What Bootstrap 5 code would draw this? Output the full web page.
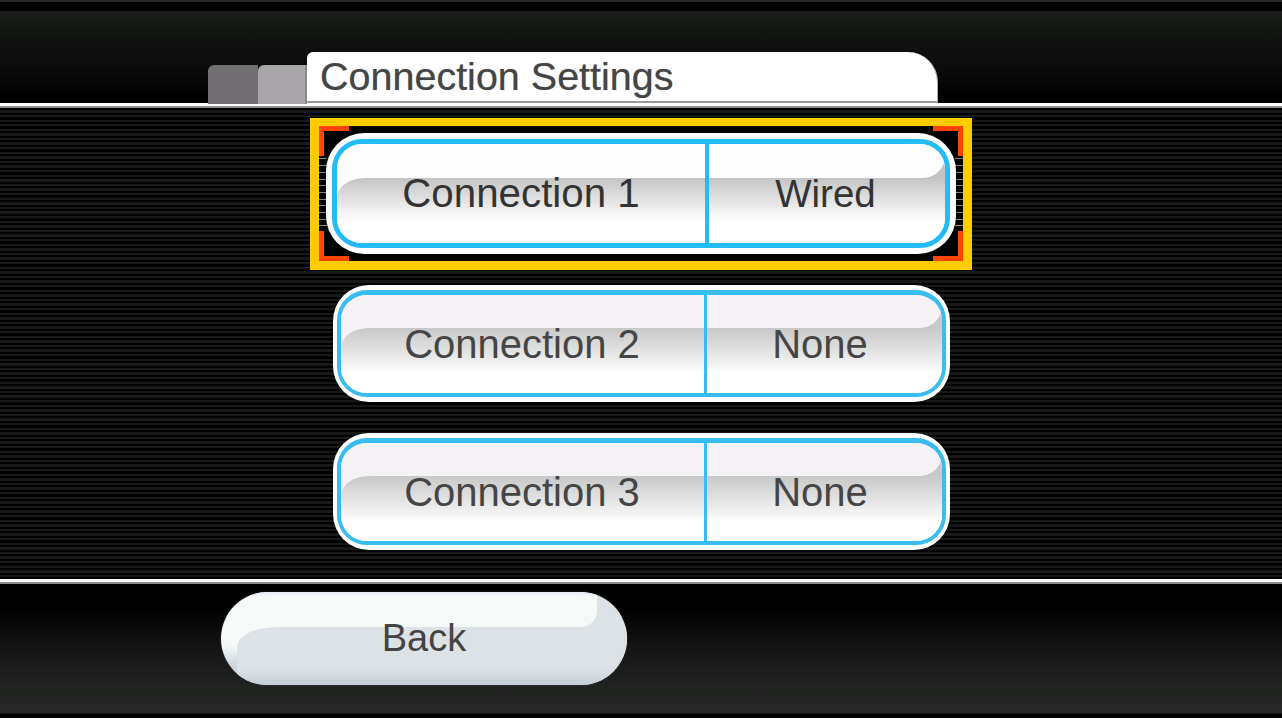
<!DOCTYPE html>
<html lang="en">
<head>
<meta charset="utf-8">
<title>Connection Settings</title>
<link href="https://cdn.jsdelivr.net/npm/bootstrap@5.3.0/dist/css/bootstrap.min.css" rel="stylesheet">
<style>
html,body{margin:0;height:718px;overflow:hidden;background:#000;font-family:"Liberation Sans",Arial,sans-serif}
.wii-screen{width:1282px;height:718px;text-shadow:0 0 1px rgba(70,70,70,.55)}
.wii-head{height:103px;flex:none;padding-left:208px;background:linear-gradient(to bottom,#2a2a2a 0 2px,#000 2px 11px,#1b1e1b 11px,#121412 35px,#0b0c0b 65px,#000 100px)}
.wii-rule{flex:none;height:5px;background:linear-gradient(to bottom,#fff 0 3px,#8d8d8d 3px)}
.tab-a,.tab-b{width:49.5px;height:39px;margin-bottom:-1px;border-radius:6px 0 0 0;position:relative}
.tab-a{background:#716f71}
.tab-b{background:#a8a6a9;border-right:2px solid #8a888a}
.tab-main{width:631px;height:51px;background:#fff;border-radius:6px 30px 0 0;border-bottom:2px solid #999;border-right:1px solid #aaa;padding-left:13px;font-size:39.5px;line-height:49px;color:#454545;position:relative}
.wii-body{flex:0 0 471px;padding-top:10px;background:repeating-linear-gradient(to bottom,#000 0 2.3px,#161917 2.3px 4.6px)}
.sel-frame{width:662px;height:152px;border:solid #fc0;border-width:8px 9px 9px;background:#000;position:relative;margin-bottom:15px}
.sel-frame::before,.sel-frame::after{content:"";position:absolute;top:0;bottom:0;width:8px;background:repeating-linear-gradient(to bottom,#000 0 5.7px,#7c8285 5.7px 6.7px)}
.sel-frame::before{left:0}
.sel-frame::after{right:0}
.corner{position:absolute;width:30px;height:30px;border:0 solid #f40;z-index:1;background:#000}
.c-tl{left:0;top:0;border-width:5px 0 0 5px}
.c-tr{right:0;top:0;border-width:5px 5px 0 0}
.c-bl{left:0;bottom:0;border-width:0 0 5px 5px}
.c-br{right:0;bottom:0;border-width:0 5px 5px 0}
.conn-btn{display:block;flex:none;border:0;background:#fff;color:#454545;font-size:40px;line-height:1;width:617px;height:117px;padding:5px 4px;border-radius:36px;position:relative;z-index:2;--top:#f5f2f5;--dk:#c8c8c8;--lt:#f6f6f6;--band:33px}
.conn-btn + .conn-btn{margin-top:31px}
.conn-box{height:100%;border:solid #37bdf0;border-width:5px 4px 4px;border-radius:30px;overflow:hidden}
.cell-l{flex:0 0 363px;background:var(--top);position:relative}
.cell-l::before{content:"";position:absolute;left:0;right:0;top:var(--band);bottom:0;border-radius:28px 0 0 0/20px 0 0 0;background:linear-gradient(to bottom,var(--dk),var(--lt) 40px,#fff 43px)}
.cell-r{flex:1 1 auto;border-left:3px solid #37bdf0;padding-right:8px;position:relative;background:linear-gradient(to bottom,var(--dk) var(--band),var(--lt) calc(var(--band) + 40px),#fff calc(var(--band) + 43px))}
.cell-r::before{content:"";position:absolute;left:0;right:0;top:0;height:var(--band);background:var(--top);border-radius:0 0 22px 0}
.conn-txt{position:relative}
.conn-btn.is-active{width:630px;height:121px;padding:6px;color:#333;font-size:40.3px;--top:#fdfdfd;--dk:#c4c4c4;--lt:#fbfbfb;--band:34px;border-radius:38px}
.is-active .conn-box{border-width:5px;border-color:#24bcf8}
.is-active .conn-txt{top:1px}
.is-active .cell-l{flex-basis:368px}
.is-active .cell-r{border-left:4px solid #24bcf8;padding-right:3px;font-size:38.5px}
.wii-foot{flex:1 1 auto;padding:8px 0 0 221px;background:linear-gradient(to bottom,#000 0 25px,#121312 60px,#222422 105px,#272827 129px,#000 130px)}
.back-btn{display:block;border:0;width:406px;height:93px;border-radius:47px;padding:0;color:#444;font-size:38px;position:relative;overflow:hidden;box-shadow:0 0 2px rgba(90,90,90,.7);background:linear-gradient(90deg,transparent 350px,#dde2e6 350px),linear-gradient(to bottom,#f5f9f7 54px,#cfd7de 72px)}
.back-btn::after{content:"";position:absolute;left:16px;right:0;top:35px;bottom:0;border-radius:40px 0 0 0/20px 0 0 0;background:linear-gradient(to bottom,#dde2e6 42px,#c8d1d9 56px)}
.back-btn::before{content:"";position:absolute;left:30px;top:0;width:346px;height:35px;border-radius:0 0 16px 0;background:linear-gradient(to bottom,#e9ecf6 0,#f5f9f7 5px)}
.back-txt{position:relative;z-index:1}
</style>
</head>
<body>
<div class="wii-screen d-flex flex-column">
  <header class="wii-head d-flex align-items-end">
    <div class="tab-a"></div>
    <div class="tab-b"></div>
    <div class="tab-main">Connection Settings</div>
  </header>
  <div class="wii-rule"></div>
  <main class="wii-body d-flex flex-column align-items-center">
    <div class="sel-frame d-flex align-items-center justify-content-center">
      <span class="corner c-tl"></span><span class="corner c-tr"></span><span class="corner c-bl"></span><span class="corner c-br"></span>
      <button type="button" class="conn-btn is-active">
        <span class="conn-box d-flex">
          <span class="cell-l d-flex align-items-center justify-content-center"><span class="conn-txt">Connection 1</span></span>
          <span class="cell-r d-flex align-items-center justify-content-center"><span class="conn-txt">Wired</span></span>
        </span>
      </button>
    </div>
    <button type="button" class="conn-btn">
      <span class="conn-box d-flex">
        <span class="cell-l d-flex align-items-center justify-content-center"><span class="conn-txt">Connection 2</span></span>
        <span class="cell-r d-flex align-items-center justify-content-center"><span class="conn-txt">None</span></span>
      </span>
    </button>
    <button type="button" class="conn-btn">
      <span class="conn-box d-flex">
        <span class="cell-l d-flex align-items-center justify-content-center"><span class="conn-txt">Connection 3</span></span>
        <span class="cell-r d-flex align-items-center justify-content-center"><span class="conn-txt">None</span></span>
      </span>
    </button>
  </main>
  <div class="wii-rule"></div>
  <footer class="wii-foot">
    <button type="button" class="back-btn"><span class="back-txt">Back</span></button>
  </footer>
</div>
<script src="https://cdn.jsdelivr.net/npm/bootstrap@5.3.0/dist/js/bootstrap.bundle.min.js"></script>
</body>
</html>
